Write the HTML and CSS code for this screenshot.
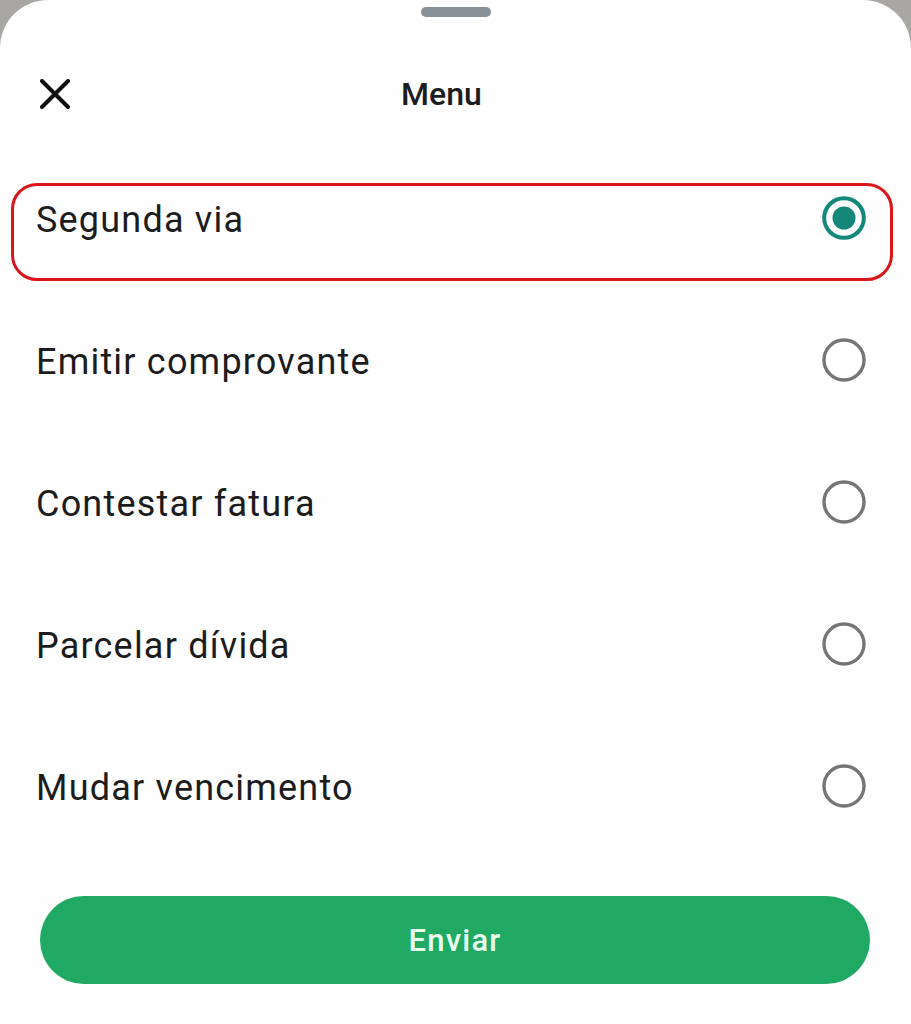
FILE: index.html
```html
<!DOCTYPE html>
<html lang="pt">
<head>
<meta charset="utf-8">
<title>Menu</title>
<link rel="stylesheet" href="styles.css">
</head>
<body>
<div class="sheet">
  <div class="handle"></div>
  <div class="header">
    <svg class="close" width="30" height="30" viewBox="0 0 30 30" aria-label="Fechar">
      <path d="M2 2 L28 28 M28 2 L2 28" stroke="#111" stroke-width="4" stroke-linecap="round" fill="none"/>
    </svg>
    <div class="title">Menu</div>
  </div>
  <div class="list">
    <div class="row selected">
      <span class="label">Segunda via</span>
      <svg class="radio" width="44" height="44" viewBox="0 0 44 44">
        <circle cx="22" cy="22" r="19.8" fill="none" stroke="#12877a" stroke-width="4"/>
        <circle cx="22" cy="22" r="11.5" fill="#12877a"/>
      </svg>
    </div>
    <div class="row">
      <span class="label">Emitir comprovante</span>
      <svg class="radio" width="44" height="44" viewBox="0 0 44 44">
        <circle cx="22" cy="22" r="20" fill="none" stroke="#757575" stroke-width="3.4"/>
      </svg>
    </div>
    <div class="row">
      <span class="label">Contestar fatura</span>
      <svg class="radio" width="44" height="44" viewBox="0 0 44 44">
        <circle cx="22" cy="22" r="20" fill="none" stroke="#757575" stroke-width="3.4"/>
      </svg>
    </div>
    <div class="row">
      <span class="label">Parcelar dívida</span>
      <svg class="radio" width="44" height="44" viewBox="0 0 44 44">
        <circle cx="22" cy="22" r="20" fill="none" stroke="#757575" stroke-width="3.4"/>
      </svg>
    </div>
    <div class="row">
      <span class="label">Mudar vencimento</span>
      <svg class="radio" width="44" height="44" viewBox="0 0 44 44">
        <circle cx="22" cy="22" r="20" fill="none" stroke="#757575" stroke-width="3.4"/>
      </svg>
    </div>
  </div>
  <button class="send">Enviar</button>
</div>
</body>
</html>
```
FILE: styles.css
```css
html, body {
  margin: 0;
  padding: 0;
}
body {
  background: #a8a7a3;
  font-family: Roboto, "Noto Sans", sans-serif;
  width: 911px;
  height: 1024px;
  overflow: hidden;
}
.sheet {
  background: #fefefe;
  border-radius: 48px 48px 0 0;
  height: 1024px;
  padding-top: 7px;
  box-sizing: border-box;
  display: flex;
  flex-direction: column;
}
.handle {
  width: 70px;
  height: 10px;
  border-radius: 5px;
  background: #879096;
  align-self: center;
}
.header {
  display: flex;
  align-items: center;
  height: 40px;
  margin-top: 57px;
  padding-left: 40px;
}
.close {
  display: block;
  flex: none;
}
.title {
  margin-left: 331px;
  font-size: 32px;
  line-height: 40px;
  font-weight: 500;
  color: #1b1c1d;
}
.list {
  margin: 69px 18px 0 11px;
  display: flex;
  flex-direction: column;
  gap: 44px;
}
.row {
  height: 98px;
  box-sizing: border-box;
  border: 3px solid transparent;
  border-radius: 26px;
  padding: 12px 24px 0 22px;
  display: flex;
  align-items: flex-start;
  justify-content: space-between;
}
.row.selected {
  border-color: #d9151b;
}
.label {
  font-size: 36px;
  line-height: 44px;
  letter-spacing: 1.2px;
  color: #1c1c1c;
}
.radio {
  display: block;
  flex: none;
  margin-top: -2px;
}
.send {
  margin: 47px 41px 0 40px;
  height: 88px;
  border: none;
  border-radius: 44px;
  background: #1fa962;
  color: #e8fff0;
  font-family: Roboto, "Noto Sans", sans-serif;
  font-size: 31px;
  font-weight: 500;
  letter-spacing: 1.2px;
  padding: 0;
}
```
